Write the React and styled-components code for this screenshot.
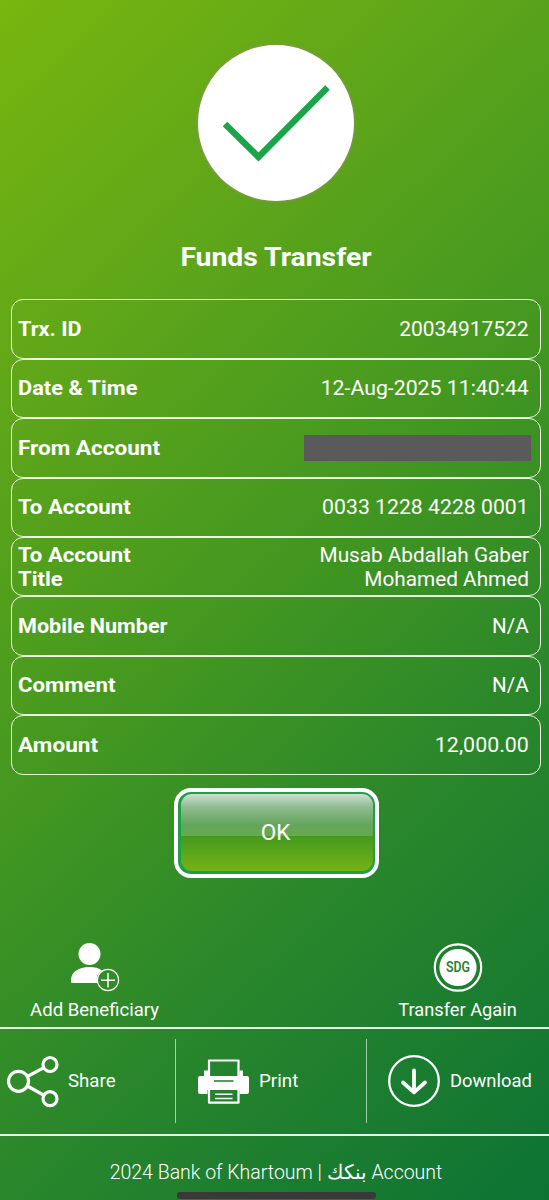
import React from 'react';
import styled, { createGlobalStyle } from 'styled-components';

const Global = createGlobalStyle`
  html, body { margin: 0; padding: 0; }
  * { box-sizing: border-box; }
  body { font-family: Roboto, "Noto Sans", "Liberation Sans", sans-serif; color: #fff; }
`;
const Screen = styled.main`
  width: 549px; height: 1200px; overflow: hidden;
  display: flex; flex-direction: column;
  background: linear-gradient(137deg, #78b60f 0%, #5da51a 26%, #419621 50%, #29862b 70%, #0c7334 100%);
`;
const SuccessMark = styled.div`
  width: 156px; height: 156px; margin: 45px 0 0 198px; border-radius: 50%;
  background: #fff; box-shadow: 0 0 4px rgba(150, 140, 110, 0.9);
  svg { display: block; width: 156px; height: 156px; }
`;
const Title = styled.h1`
  margin: 40px 0 0 3px; height: 32px; line-height: 32px; text-align: center;
  font-size: 25.5px; font-weight: 700; transform: scaleX(1.11);
`;
const Details = styled.section`
  display: flex; flex-direction: column; margin: 26.4px 8px 0 11px;
`;
const DetailRow = styled.div`
  height: 59.4px; display: flex; align-items: center; justify-content: space-between;
  padding: 0 11px 0 6px; border: 1.4px solid rgba(244, 255, 236, 0.95); border-radius: 12px;
  font-size: 20px; line-height: 24px;
`;
const Label = styled.div`
  font-weight: 700;
`;
const Value = styled.div`
  text-align: right;
`;
const Line = styled.span`
  display: block; white-space: nowrap; transform: scaleX(${p => p.$stretch});
  transform-origin: ${p => p.$origin} center;
`;
const Redacted = styled.div`
  width: 227px; height: 26px; margin-right: -2px; background: #5a5a5a;
`;
const OkButton = styled.button`
  width: 205px; height: 90px; margin: 13.4px 0 0 174px; padding: 2.5px; flex: none;
  border: 4.5px solid #fff; border-radius: 17px; background: #1d9f48; font: inherit; color: #fff;
  display: flex;
`;
const OkFace = styled.span`
  flex: 1; display: flex; align-items: center; justify-content: center;
  border-radius: 11px; padding: 0 2px 2px 0; font-size: 22.5px;
  background: linear-gradient(180deg, #cfe0d0 0%, #8fbb90 17%, #64a55c 40%, #66aa50 54%, #459a1e 55%, #75b314 100%);
`;
const QuickActions = styled.div`
  display: flex; justify-content: space-between; margin-top: 65px; height: 84px;
  padding: 0 33px 0 32px;
`;
const QuickAction = styled.div`
  display: flex; flex-direction: column; align-items: center;
  svg { display: block; width: 50px; height: 50px; }
`;
const Caption = styled.span`
  margin-top: ${p => p.$top || 0}px; font-size: 18px; line-height: 24px; white-space: nowrap;
  transform: scaleX(${p => p.$stretch || 1}); transform-origin: ${p => p.$origin || 'center'} center;
`;
const Toolbar = styled.nav`
  display: flex; height: 109px; border-top: 2px solid #e6f5e4; border-bottom: 2px solid #e6f5e4;
  padding: 10px 0 11px;
`;
const Tool = styled.div`
  width: ${p => p.$width}px; height: 84px; display: flex; align-items: center;
  padding-left: ${p => p.$pad}px; gap: ${p => p.$gap}px;
  border-right: ${p => (p.$last ? 0 : 1)}px solid rgba(220, 240, 215, 0.7);
  svg { display: block; flex: none; width: 52px; height: 54px; }
`;
const Footer = styled.footer`
  height: 64px; display: flex; flex-direction: column; align-items: center; padding-top: 21px;
  font-size: 19.5px; font-weight: 300;
`;
const Copyright = styled.div`
  height: 32px; line-height: 32px; margin-left: 3px; white-space: nowrap;
`;
const HomeBar = styled.i`
  width: 199px; height: 7px; margin: 3px 0 0 4px; border-radius: 3px; background: #383a38;
`;

const rows = [
  { label: [['Trx. ID', 1.08]], value: [['20034917522', 1.047]] },
  { label: [['Date & Time', 1.09]], value: [['12-Aug-2025 11:40:44', 1.063]] },
  { label: [['From Account', 1.127]] },
  { label: [['To Account', 1.108]], value: [['0033 1228 4228 0001', 1.061]] },
  { label: [['To Account', 1.108], ['Title', 1.1]], value: [['Musab Abdallah Gaber', 1.037], ['Mohamed Ahmed', 1.038]] },
  { label: [['Mobile Number', 1.08]], value: [['N/A', 1.03]] },
  { label: [['Comment', 1.11]], value: [['N/A', 1.03]] },
  { label: [['Amount', 1.13]], value: [['12,000.00', 1.07]] },
];

const AddPersonIcon = () => (
  <svg viewBox="0 0 50 50" fill="#fff">
    <circle cx="19.500" cy="11" r="11" />
    <path d="M1 40.500V37C1 29 9 24 19 24C25 24 29 25 32 27.500C28 30 26.500 34 27 37L28 40H2Q1 40 1 39Z" />
    <circle cx="38" cy="37" r="10.600" fill="none" stroke="#fff" strokeWidth="1.100" />
    <path d="M38 30V44.500M31 37.200H45" stroke="#fff" strokeWidth="1.500" />
  </svg>
);
const CurrencyIcon = () => (
  <svg viewBox="0 0 50 50">
    <circle cx="25" cy="24.500" r="23.200" fill="none" stroke="#fff" strokeWidth="2.200" />
    <circle cx="25" cy="24.500" r="18.600" fill="#fff" />
    <text x="25" y="29" textAnchor="middle" textLength="24" lengthAdjust="spacingAndGlyphs" fontFamily="Roboto, sans-serif" fontSize="14" fontWeight="600" fill="#25822b">SDG</text>
  </svg>
);
const ShareIcon = () => (
  <svg viewBox="0 0 52 54" fill="none" stroke="#fff" strokeWidth="3.200">
    <circle cx="11.500" cy="27.300" r="10" />
    <circle cx="43" cy="10.500" r="7" />
    <circle cx="43" cy="44.700" r="7" />
    <path d="M20.300 22.500L36.500 13.800M20.300 32L36.500 41" />
  </svg>
);
const PrintIcon = () => (
  <svg viewBox="0 0 52 54" fill="none" stroke="#fff" strokeLinejoin="round">
    <path d="M12 23V6.500H41.500V23" strokeWidth="2.200" />
    <path d="M3 22H7V16.500H11V22H42.500V16.500H46V22H50Q52 22 52 24V38Q52 40 50 40H42.500V36H10.500V40H3Q1 40 1 38V24Q1 22 3 22Z" fill="#fff" stroke="none" />
    <path d="M17 27H36.500" stroke="#2d872a" strokeWidth="1.600" />
    <path d="M12 36V48.700H41.500V36" strokeWidth="2.200" />
    <path d="M18 40.300H35.500M18 44.500H35.500" strokeWidth="1.400" />
  </svg>
);
const DownloadIcon = () => (
  <svg viewBox="0 0 52 54" fill="none" stroke="#fff">
    <circle cx="26" cy="27" r="24.800" strokeWidth="2.300" />
    <path d="M26 16.500V38M15 28.500L26 38.300L37 28.500" strokeWidth="3.800" strokeLinecap="round" strokeLinejoin="round" />
  </svg>
);

export default function App() {
  return (
    <Screen>
      <Global />
      <SuccessMark>
        <svg viewBox="0 0 156 156">
          <path d="M27 79L60.500 112L129.500 42.500" fill="none" stroke="#1aa54a" strokeWidth="6.500" />
        </svg>
      </SuccessMark>
      <Title>Funds Transfer</Title>
      <Details>
        {rows.map((row, i) => (
          <DetailRow key={i}>
            <Label>{row.label.map(([t, s]) => <Line key={t} $stretch={s} $origin="left">{t}</Line>)}</Label>
            {row.value
              ? <Value>{row.value.map(([t, s]) => <Line key={t} $stretch={s} $origin="right">{t}</Line>)}</Value>
              : <Redacted />}
          </DetailRow>
        ))}
      </Details>
      <OkButton><OkFace>OK</OkFace></OkButton>
      <QuickActions>
        <QuickAction><AddPersonIcon /><Caption $top={5} $stretch={1.03}>Add Beneficiary</Caption></QuickAction>
        <QuickAction><CurrencyIcon /><Caption $top={5} $stretch={1.013}>Transfer Again</Caption></QuickAction>
      </QuickActions>
      <Toolbar>
        <Tool $width={176} $pad={7} $gap={9}><ShareIcon /><Caption $stretch={1.037} $origin="left">Share</Caption></Tool>
        <Tool $width={191} $pad={21} $gap={10}><PrintIcon /><Caption $stretch={1.045} $origin="left">Print</Caption></Tool>
        <Tool $width={182} $pad={21} $gap={10} $last><DownloadIcon /><Caption $stretch={1.02} $origin="left">Download</Caption></Tool>
      </Toolbar>
      <Footer>
        <Copyright>2024 Bank of Khartoum | بنكك Account</Copyright>
        <HomeBar />
      </Footer>
    </Screen>
  );
}
